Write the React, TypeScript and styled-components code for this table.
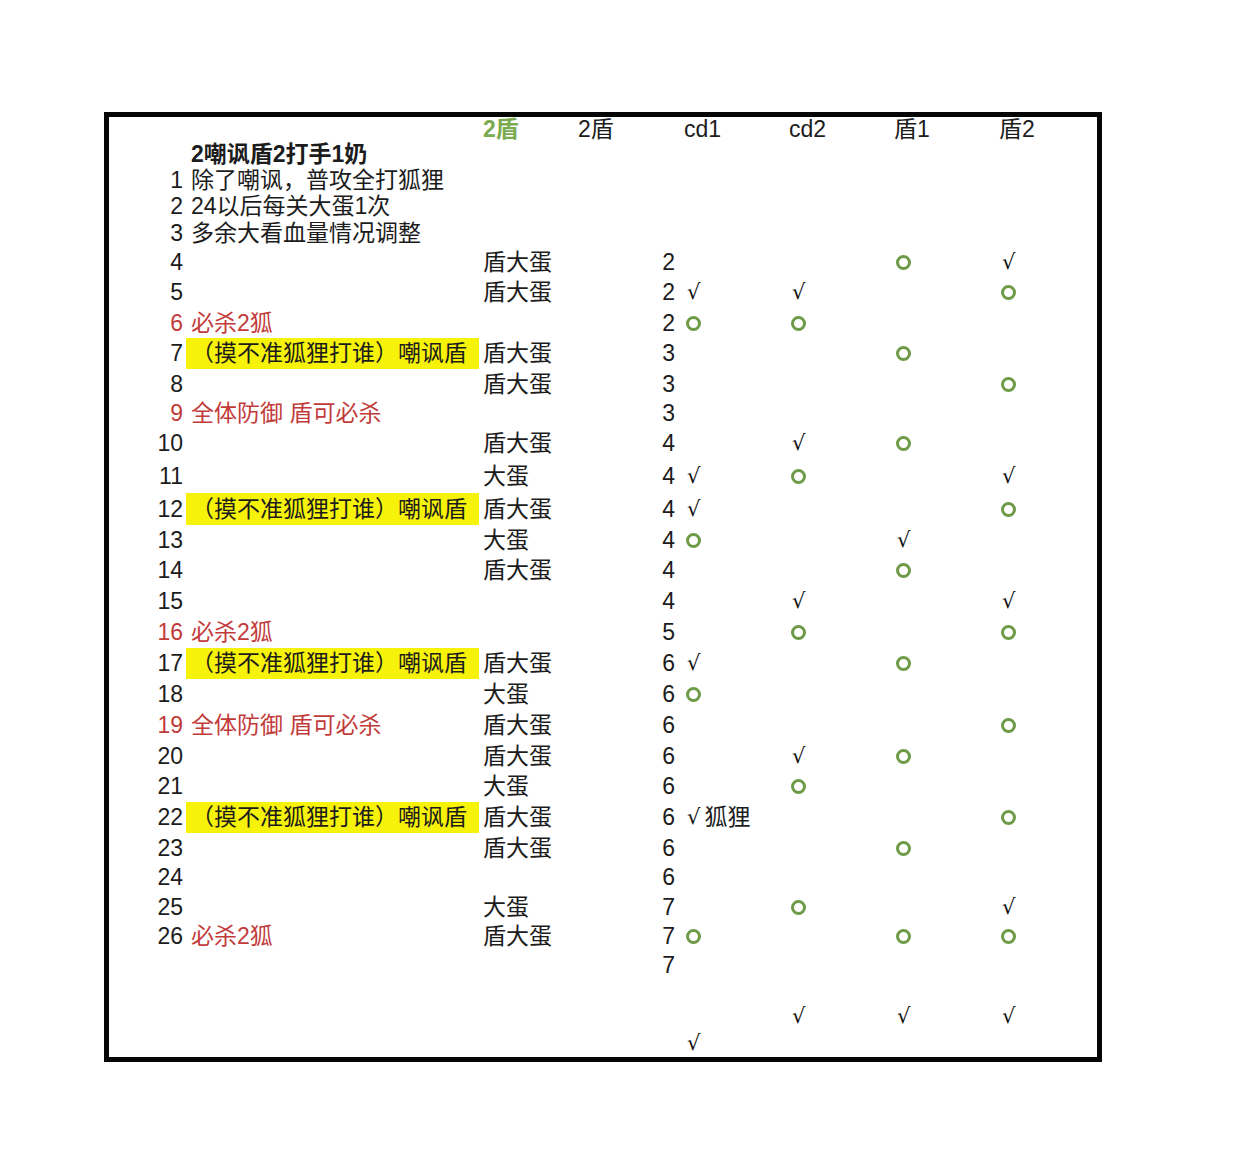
import styled, { createGlobalStyle } from "styled-components";

const GlobalStyle = createGlobalStyle`
    html, body {
        margin: 0;
        padding: 0;
        background: #ffffff;
    }
    body {
        font-family: "Liberation Sans", "Noto Sans CJK SC", sans-serif;
        color: #1c1c1c;
    }
`;

const Page = styled.div`
    width: 1256px;
    min-height: 1166px;
    padding: 112px 0 0 104px;
    box-sizing: border-box;
`;

const Sheet = styled.div`
    width: 998px;
    box-sizing: border-box;
    border: 5px solid #050505;
    display: flex;
    flex-direction: column;
`;

const Row = styled.div<{ $h: number }>`
    display: grid;
    grid-template-columns: 77px 293px 95px 106px 105px 105px 105px 102px;
    height: ${(p) => p.$h}px;
    font-size: 23px;
    line-height: 1;
    white-space: nowrap;
`;

const NumCell = styled.div<{ $red?: boolean }>`
    display: flex;
    align-items: center;
    justify-content: flex-end;
    padding-right: 3px;
    color: ${(p) => (p.$red ? "#c23b3b" : "#1c1c1c")};
`;

const NoteCell = styled.div<{ $red?: boolean; $marked?: boolean; $bold?: boolean }>`
    display: flex;
    align-items: center;
    padding-left: 5px;
    overflow: visible;
    color: ${(p) => (p.$red ? "#c23b3b" : "#1c1c1c")};
    background: ${(p) => (p.$marked ? "#f7f20a" : "transparent")};
    font-weight: ${(p) => (p.$bold ? 700 : 400)};
`;

const TextCell = styled.div<{ $green?: boolean }>`
    display: flex;
    align-items: center;
    padding-left: 4px;
    color: ${(p) => (p.$green ? "#7bab50" : "#1c1c1c")};
    font-weight: ${(p) => (p.$green ? 700 : 400)};
`;

const CountCell = styled.div`
    display: flex;
    align-items: center;
    justify-content: flex-end;
    padding-right: 5px;
`;

const MarkCell = styled.div`
    display: flex;
    align-items: center;
    padding-left: 7px;
    gap: 4px;
`;

const Check = styled.span`
    font-family: "DejaVu Sans", sans-serif;
    font-size: 21px;
    color: #111;
`;

const Ring = styled.span`
    display: inline-block;
    width: 15px;
    height: 15px;
    box-sizing: border-box;
    border: 3px solid #6d9b48;
    border-radius: 50%;
    margin-left: -1px;
`;

type Mark = "" | "o" | "v" | string;

interface Line {
    h: number;
    n?: string;
    note?: string;
    red?: "all" | "note";
    marked?: boolean;
    bold?: boolean;
    c?: string;
    d?: string;
    marks?: Mark[];
    head?: boolean;
}

const TAUNT = "（摸不准狐狸打谁）嘲讽盾";

const lines: Line[] = [
    { h: 24, head: true },
    { h: 26, note: "2嘲讽盾2打手1奶", bold: true },
    { h: 26, n: "1", note: "除了嘲讽，普攻全打狐狸" },
    { h: 26, n: "2", note: "24以后每关大蛋1次" },
    { h: 28, n: "3", note: "多余大看血量情况调整" },
    { h: 30, n: "4", c: "盾大蛋", d: "2", marks: ["", "", "o", "v"] },
    { h: 31, n: "5", c: "盾大蛋", d: "2", marks: ["v", "v", "", "o"] },
    { h: 30, n: "6", note: "必杀2狐", red: "all", d: "2", marks: ["o", "o", "", ""] },
    { h: 31, n: "7", note: TAUNT, marked: true, c: "盾大蛋", d: "3", marks: ["", "", "o", ""] },
    { h: 30, n: "8", c: "盾大蛋", d: "3", marks: ["", "", "", "o"] },
    { h: 28, n: "9", note: "全体防御 盾可必杀", red: "all", d: "3" },
    { h: 32, n: "10", c: "盾大蛋", d: "4", marks: ["", "v", "o", ""] },
    { h: 34, n: "11", c: "大蛋", d: "4", marks: ["v", "o", "", "v"] },
    { h: 32, n: "12", note: TAUNT, marked: true, c: "盾大蛋", d: "4", marks: ["v", "", "", "o"] },
    { h: 30, n: "13", c: "大蛋", d: "4", marks: ["o", "", "v", ""] },
    { h: 31, n: "14", c: "盾大蛋", d: "4", marks: ["", "", "o", ""] },
    { h: 31, n: "15", d: "4", marks: ["", "v", "", "v"] },
    { h: 31, n: "16", note: "必杀2狐", red: "all", d: "5", marks: ["", "o", "", "o"] },
    { h: 31, n: "17", note: TAUNT, marked: true, c: "盾大蛋", d: "6", marks: ["v", "", "o", ""] },
    { h: 31, n: "18", c: "大蛋", d: "6", marks: ["o", "", "", ""] },
    { h: 31, n: "19", note: "全体防御 盾可必杀", red: "all", c: "盾大蛋", d: "6", marks: ["", "", "", "o"] },
    { h: 30, n: "20", c: "盾大蛋", d: "6", marks: ["", "v", "o", ""] },
    { h: 31, n: "21", c: "大蛋", d: "6", marks: ["", "o", "", ""] },
    { h: 31, n: "22", note: TAUNT, marked: true, c: "盾大蛋", d: "6", marks: ["v狐狸", "", "", "o"] },
    { h: 30, n: "23", c: "盾大蛋", d: "6", marks: ["", "", "o", ""] },
    { h: 29, n: "24", d: "6" },
    { h: 30, n: "25", c: "大蛋", d: "7", marks: ["", "o", "", "v"] },
    { h: 29, n: "26", note: "必杀2狐", red: "note", c: "盾大蛋", d: "7", marks: ["o", "", "o", "o"] },
    { h: 29, d: "7" },
    { h: 23 },
    { h: 27, marks: ["", "v", "v", "v"] },
    { h: 27, marks: ["v", "", "", ""] },
];

const MarkView = ({ mark }: { mark: Mark }) => {
    if (mark === "o") return <Ring />;
    if (mark.startsWith("v"))
        return (
            <>
                <Check>√</Check>
                {mark.slice(1)}
            </>
        );
    return null;
};

const headers = ["cd1", "cd2", "盾1", "盾2"];

const App = () => {
    return (
        <Page>
            <GlobalStyle />
            <Sheet>
                {lines.map((line, i) =>
                    line.head ? (
                        <Row key={i} $h={line.h}>
                            <NumCell />
                            <NoteCell />
                            <TextCell $green>2盾</TextCell>
                            <TextCell>2盾</TextCell>
                            {headers.map((h) => (
                                <TextCell key={h}>{h}</TextCell>
                            ))}
                        </Row>
                    ) : (
                        <Row key={i} $h={line.h}>
                            <NumCell $red={line.red === "all"}>{line.n}</NumCell>
                            <NoteCell
                                $red={!!line.red}
                                $marked={line.marked}
                                $bold={line.bold}
                            >
                                {line.note}
                            </NoteCell>
                            <TextCell>{line.c}</TextCell>
                            <CountCell>{line.d}</CountCell>
                            {[0, 1, 2, 3].map((k) => (
                                <MarkCell key={k}>
                                    <MarkView mark={line.marks?.[k] ?? ""} />
                                </MarkCell>
                            ))}
                        </Row>
                    )
                )}
            </Sheet>
        </Page>
    );
};

export default App;
